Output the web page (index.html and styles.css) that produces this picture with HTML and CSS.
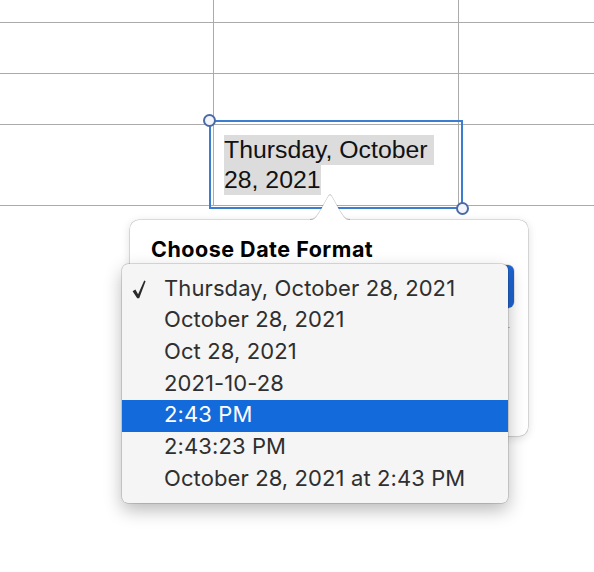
FILE: index.html
```html
<!DOCTYPE html>
<html>
<head>
<meta charset="utf-8">
<link rel="stylesheet" href="styles.css">
</head>
<body>
<div class="page">
  <div class="sheet">
    <div class="cell c1"></div><div class="cell c2"></div><div class="cell c3"></div>
    <div class="cell c1"></div><div class="cell c2"></div><div class="cell c3"></div>
    <div class="cell c1"></div><div class="cell c2"></div><div class="cell c3"></div>
    <div class="cell c1"></div>
    <div class="cell c2 date-cell">
      <span class="sel-line">Thursday, October&nbsp;</span>
      <span class="sel-line">28, 2021</span>
    </div>
    <div class="cell c3"></div>
  </div>

  <div class="selection">
    <span class="handle handle-tl"></span>
    <span class="handle handle-br"></span>
  </div>

  <div class="popover">
    <svg class="popover-arrow" width="40" height="27" viewBox="0 0 40 27">
      <path d="M0 27 L0 26 C5 26 6.5 22.5 9 19 L18.3 2.6 Q20 0 21.7 2.6 L31 19 C33.5 22.5 35 26 40 26 L40 27 Z" fill="#ffffff"/>
    </svg>
    <div class="popover-body">
      <div class="popover-title">Choose Date Format</div>
      <div class="popup-button"><span class="popup-arrows"></span></div>
      <div class="popover-sep"></div>
    </div>

    <div class="menu">
      <div class="menu-item"><svg class="check" width="14" height="19" viewBox="0 0 14 19"><path d="M0.6 11.2 L3.4 9.6 L6.1 14.2 L12.2 0.6 L13.6 1.2 L7.2 18.2 L5.2 18.2 Z" fill="#2a2a2a"/></svg>Thursday, October 28, 2021</div>
      <div class="menu-item">October 28, 2021</div>
      <div class="menu-item">Oct 28, 2021</div>
      <div class="menu-item">2021-10-28</div>
      <div class="menu-item active">2:43 PM</div>
      <div class="menu-item">2:43:23 PM</div>
      <div class="menu-item">October 28, 2021 at 2:43 PM</div>
    </div>
  </div>
</div>
</body>
</html>
```

FILE: styles.css
```css
html, body {
  margin: 0;
  padding: 0;
  background: #ffffff;
}

.page {
  position: relative;
  width: 594px;
  height: 572px;
  overflow: hidden;
}

.sheet {
  display: grid;
  grid-template-columns: 214px 245px 1fr;
  grid-template-rows: 23px 51px 51px 81px;
}

.cell {
  box-sizing: border-box;
  border-bottom: 1px solid #ababab;
}

.c1, .c2 {
  border-right: 1px solid #ababab;
}

.date-cell {
  padding: 10px 0 0 10px;
  font-family: "Liberation Sans", Arial, sans-serif;
  font-size: 24.8px;
  line-height: 30px;
  color: #111111;
  display: flex;
  flex-direction: column;
  align-items: flex-start;
}

.sel-line {
  background: #dcdcdc;
  white-space: pre;
}

.selection {
  position: absolute;
  left: 209px;
  top: 120px;
  width: 254px;
  height: 89px;
  box-sizing: border-box;
  border: 2px solid #3b7dd0;
}

.handle {
  position: absolute;
  width: 9px;
  height: 9px;
  border: 2px solid #4c6aa6;
  border-radius: 50%;
  background: #f3f5fa;
}

.handle-tl {
  left: -8px;
  top: -8px;
}

.handle-br {
  right: -8px;
  bottom: -8px;
}

.popover {
  position: absolute;
  left: 130px;
  top: 220px;
  width: 398px;
  height: 216px;
}

.popover-arrow {
  position: absolute;
  left: 180px;
  top: -26px;
  z-index: 1;
  filter: drop-shadow(0 -0.5px 0.6px rgba(0,0,0,0.25));
}

.popover-body {
  box-sizing: border-box;
  width: 100%;
  height: 100%;
  background: #ffffff;
  border-radius: 9px;
  box-shadow: 0 0 0 0.5px rgba(0,0,0,0.22), 0 2px 10px rgba(0,0,0,0.14);
  padding: 17px 0 0 21px;
  display: flex;
  flex-direction: column;
}

.popover-title {
  font-family: Inter, "Noto Sans", sans-serif;
  font-weight: 700;
  font-size: 21.5px;
  line-height: 25px;
  color: #000000;
  letter-spacing: 0.5px;
}

.popup-button {
  margin-top: 3px;
  width: 363px;
  height: 43px;
  border-radius: 6px;
  background: #ffffff;
  box-shadow: 0 0 0 0.5px rgba(0,0,0,0.2);
  position: relative;
  overflow: hidden;
}

.popup-arrows {
  position: absolute;
  right: 0;
  top: 0;
  width: 22px;
  height: 100%;
  background: linear-gradient(90deg, #5f9ce8 0%, #2a72dc 40%, #1a62d2 100%);
}

.popover-sep {
  margin-top: 19px;
  width: 359px;
  height: 1px;
  background: #c9c9c9;
}

.menu {
  position: absolute;
  left: -8px;
  top: 44px;
  width: 386px;
  height: 239px;
  box-sizing: border-box;
  padding: 9.5px 0 0 0;
  background: #f5f5f5;
  border-radius: 6px;
  box-shadow: 0 0 0 0.5px rgba(0,0,0,0.25), 0 7px 18px rgba(0,0,0,0.28);
  font-family: Inter, "Noto Sans", sans-serif;
  font-size: 22px;
  letter-spacing: 0.1px;
  color: #2f2f2f;
  z-index: 2;
}

.menu-item {
  position: relative;
  height: 31.7px;
  line-height: 29px;
  padding-left: 42px;
  white-space: nowrap;
}

.menu-item.active {
  background: #136ada;
  color: #ffffff;
}

.check {
  position: absolute;
  left: 10px;
  top: 6px;
}
```
